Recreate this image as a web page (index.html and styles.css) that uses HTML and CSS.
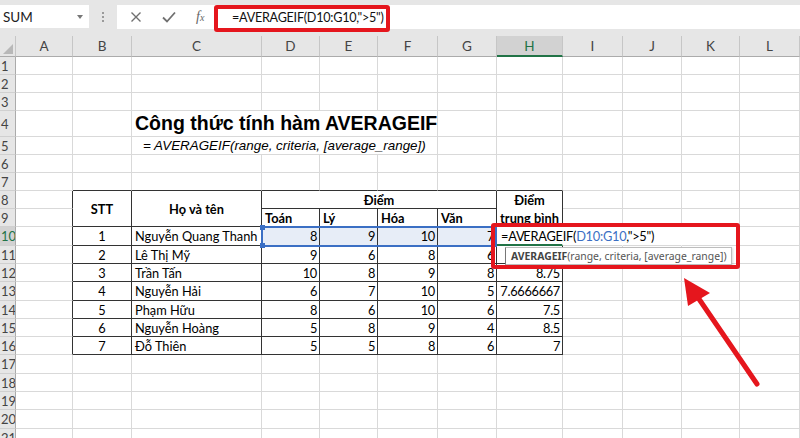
FILE: index.html
```html
<!DOCTYPE html>
<html lang="vi">
<head>
<meta charset="utf-8">
<title>AVERAGEIF</title>
<link rel="stylesheet" href="styles.css">
</head>
<body>
<div class="app">
  <div class="topbar">
    <div class="namebox"><span>SUM</span><span class="drop"></span></div>
    <div class="dots"><span></span><span></span><span></span></div>
    <div class="fbar">
      <div class="fbtns">
        <svg class="ico" width="12" height="12" viewBox="0 0 12 12"><path d="M1.5 1.5 L10.5 10.5 M10.5 1.5 L1.5 10.5" stroke="#707070" stroke-width="1.4" fill="none"/></svg>
        <svg class="ico" width="14" height="12" viewBox="0 0 14 12"><path d="M1 6.5 L5 10.5 L13 1.5" stroke="#707070" stroke-width="1.8" fill="none"/></svg>
        <span class="fx">f<sub>x</sub></span>
      </div>
      <div class="ftext">=AVERAGEIF(D10:G10,"&gt;5")</div>
    </div>
  </div>

  <div class="sheet">
    <div class="ch corner"><span class="tri"></span></div>
    <div class="ch">A</div><div class="ch">B</div><div class="ch">C</div><div class="ch">D</div><div class="ch">E</div><div class="ch">F</div><div class="ch">G</div><div class="ch on">H</div><div class="ch">I</div><div class="ch">J</div><div class="ch">K</div><div class="ch">L</div>

    <div class="rh">1</div><i></i><i></i><i></i><i></i><i></i><i></i><i></i><i></i><i></i><i></i><i></i><i></i>
    <div class="rh">2</div><i></i><i></i><i></i><i></i><i></i><i></i><i></i><i></i><i></i><i></i><i></i><i></i>
    <div class="rh">3</div><i></i><i></i><i></i><i></i><i></i><i></i><i></i><i></i><i></i><i></i><i></i><i></i>
    <div class="rh">4</div><i></i><i></i><div class="title">Công thức tính hàm AVERAGEIF</div><i></i><i></i><i></i><i></i><i></i><i></i>
    <div class="rh">5</div><i></i><i></i><div class="sub">= AVERAGEIF(range, criteria, [average_range])</div><i></i><i></i><i></i><i></i><i></i><i></i>
    <div class="rh">6</div><i></i><i></i><i></i><i></i><i></i><i></i><i></i><i></i><i></i><i></i><i></i><i></i>
    <div class="rh">7</div><i></i><i class="bt"></i><i class="bt"></i><i class="bt"></i><i class="bt"></i><i class="bt"></i><i class="bt"></i><i class="bt"></i><i></i><i></i><i></i><i></i>

    <div class="rh">8</div><i class="bl"></i><div class="t b c r2">STT</div><div class="t b c r2">Họ và tên</div><div class="t b c c4">Điểm</div><div class="t b c r2 wrap">Điểm<br>trung bình</div><i></i><i></i><i></i><i></i>
    <div class="rh">9</div><i class="bl"></i><div class="t b">Toán</div><div class="t b">Lý</div><div class="t b">Hóa</div><div class="t b">Văn</div><i></i><i></i><i></i><i></i>

    <div class="rh on">10</div><i class="bl"></i><div class="t c">1</div><div class="t">Nguyễn Quang Thanh</div><div class="t n sel">8</div><div class="t n sel">9</div><div class="t n sel">10</div><div class="t n sel">7</div><div class="t edit">=AV<span class="cur"></span>ERAGEIF(<span class="ref">D10:G10</span>,"&gt;5")</div><i class="open"></i><i class="open"></i><i></i><i></i>
    <div class="rh">11</div><i class="bl"></i><div class="t c">2</div><div class="t">Lê Thị Mỹ</div><div class="t n">9</div><div class="t n">6</div><div class="t n">8</div><div class="t n">6</div><div class="t n"></div><i></i><i></i><i></i><i></i>
    <div class="rh">12</div><i class="bl"></i><div class="t c">3</div><div class="t">Trần Tấn</div><div class="t n">10</div><div class="t n">8</div><div class="t n">9</div><div class="t n">8</div><div class="t n">8.75</div><i></i><i></i><i></i><i></i>
    <div class="rh">13</div><i class="bl"></i><div class="t c">4</div><div class="t">Nguyễn Hải</div><div class="t n">6</div><div class="t n">7</div><div class="t n">10</div><div class="t n">5</div><div class="t n">7.6666667</div><i></i><i></i><i></i><i></i>
    <div class="rh">14</div><i class="bl"></i><div class="t c">5</div><div class="t">Phạm Hữu</div><div class="t n">8</div><div class="t n">6</div><div class="t n">10</div><div class="t n">6</div><div class="t n">7.5</div><i></i><i></i><i></i><i></i>
    <div class="rh">15</div><i class="bl"></i><div class="t c">6</div><div class="t">Nguyễn Hoàng</div><div class="t n">5</div><div class="t n">8</div><div class="t n">9</div><div class="t n">4</div><div class="t n">8.5</div><i></i><i></i><i></i><i></i>
    <div class="rh">16</div><i class="bl"></i><div class="t c">7</div><div class="t">Đỗ Thiên</div><div class="t n">5</div><div class="t n">5</div><div class="t n">8</div><div class="t n">6</div><div class="t n">7</div><i></i><i></i><i></i><i></i>

    <div class="rh">17</div><i></i><i></i><i></i><i></i><i></i><i></i><i></i><i></i><i></i><i></i><i></i><i></i>
    <div class="rh">18</div><i></i><i></i><i></i><i></i><i></i><i></i><i></i><i></i><i></i><i></i><i></i><i></i>
    <div class="rh">19</div><i></i><i></i><i></i><i></i><i></i><i></i><i></i><i></i><i></i><i></i><i></i><i></i>
    <div class="rh">20</div><i></i><i></i><i></i><i></i><i></i><i></i><i></i><i></i><i></i><i></i><i></i><i></i>
    <div class="rh">21</div><i></i><i></i><i></i><i></i><i></i><i></i><i></i><i></i><i></i><i></i><i></i><i></i>

    <div class="range"><span class="hd hd1"></span><span class="hd hd2"></span></div>
  </div>

  <div class="tip"><b>AVERAGEIF</b>(range, criteria, [average_range])</div>
  <div class="mark mark-bar"></div>
  <div class="mark mark-cell"></div>
  <svg class="arrow" width="800" height="438" viewBox="0 0 800 438">
    <line x1="699" y1="299" x2="757" y2="384" stroke="#e5161d" stroke-width="5" stroke-linecap="round"/>
    <polygon points="684,278 688,306 710,293" fill="#e5161d"/>
  </svg>
</div>
</body>
</html>
```

FILE: styles.css
```css
* { box-sizing: border-box; margin: 0; padding: 0; }
html, body { margin: 0; background: #fff; }
body { width: 800px; height: 438px; overflow: hidden; font-family: Lato, "Noto Sans", sans-serif; }
.app { position: relative; width: 800px; height: 438px; overflow: hidden; }

/* top bar */
.topbar { height: 36px; background: #e6e6e6; display: flex; align-items: flex-start; padding-top: 5px; }
.namebox { width: 89px; height: 23px; background: #fff; display: flex; align-items: center; justify-content: space-between; padding: 0 6px 0 3px; font-size: 13.5px; color: #222; }
.drop { width: 0; height: 0; border-left: 3.5px solid transparent; border-right: 3.5px solid transparent; border-top: 4px solid #777; }
.dots { width: 28px; height: 23px; display: flex; flex-direction: column; align-items: center; justify-content: center; gap: 2px; }
.dots span { width: 2px; height: 2px; background: #9a9a9a; }
.fbar { flex: 1; height: 24px; background: #fff; display: flex; align-items: center; }
.fbtns { width: 97px; display: flex; align-items: center; padding-left: 13px; gap: 20px; }
.fx { font-family: "Liberation Serif", serif; font-style: italic; font-size: 14px; color: #666; }
.fx sub { font-size: 10px; vertical-align: 0; }
.ftext { padding-left: 18px; font-size: 12.6px; letter-spacing: -0.25px; color: #111; }

/* sheet */
.sheet {
  display: grid;
  position: relative;
  grid-template-columns: 16px 57px 59px 130px 58px 58px 60px 59px 66px 60px 59px 58px 60px;
  grid-template-rows: 21px 18px 18px 18px 26px 18px 18px 18px 18px 18px 19px 18px 18px 19px 18px 18px 18px 19px 18px 18px 19px 18px;
  font-size: 12.8px;
  color: #000;
}
.sheet > * {
  border-right: 1px solid #d9d9d9;
  border-bottom: 1px solid #d9d9d9;
  background: #fff;
  display: flex;
  align-items: center;
  padding: 0 3px;
  white-space: nowrap;
  overflow: hidden;
}
.sheet > .ch { background: #e6e6e6; justify-content: center; color: #444; font-size: 13.5px; border-right-color: #c6c6c6; border-bottom-color: #ababab; }
.sheet > .ch.on { background: #d2d2d2; color: #217346; border-bottom: 2px solid #217346; }
.sheet > .corner { position: relative; }
.tri { position: absolute; right: 2px; bottom: 2px; width: 0; height: 0; border-left: 10px solid transparent; border-bottom: 10px solid #b8b8b8; }
.sheet > .rh { background: #e6e6e6; color: #444; font-size: 13px; padding: 0 0 0 1px; border-right-color: #ababab; border-bottom-color: #d0d0d0; }
.sheet > .rh.on { background: #d2d2d2; color: #217346; }

.sheet > .title { grid-column: 4 / 8; font-family: "Liberation Sans", Arial, sans-serif; font-weight: bold; font-size: 19.5px; padding-left: 3px; overflow: visible; }
.sheet > .sub { grid-column: 4 / 8; font-family: "Liberation Sans", Arial, sans-serif; font-style: italic; font-size: 13.4px; padding-left: 11px; }

.sheet > .t { border-right-color: #333; border-bottom-color: #333; }
.sheet > .bt { border-bottom-color: #333; }
.sheet > .bl { border-right-color: #333; }
.sheet > .b { font-weight: bold; }
.sheet > .c { justify-content: center; }
.sheet > .n { justify-content: flex-end; letter-spacing: -0.3px; padding-right: 2px; }
.sheet > .r2 { grid-row: span 2; }
.sheet > .c4 { grid-column: span 4; }
.sheet > .wrap { text-align: center; line-height: 18px; align-items: flex-start; padding: 0; }
.sheet > .sel { background: #e7edf7; }

.sheet > .edit { overflow: visible; z-index: 2; border-right-color: transparent; border-bottom: 2px solid #217346; font-size: 12.8px; letter-spacing: -0.25px; padding-left: 4px; position: relative; }
.ref { color: #3b6fc4; }
.cur { display: inline-block; width: 1px; height: 17px; background: #000; margin-right: -1px; vertical-align: middle; }
.sheet > .open { border-right-color: transparent; }

.range { position: absolute; grid-column: 5 / 9; grid-row: 11 / 12; top: -1px; left: -1px; right: 0; bottom: -1px; border: 2px solid #3b6fc4; background: none; padding: 0; overflow: visible; }
.hd { position: absolute; width: 5px; height: 5px; background: #3b6fc4; left: -3px; }
.hd1 { top: -3px; }
.hd2 { bottom: -3px; }

/* overlays */
.tip { position: absolute; left: 505px; top: 247px; width: 227px; height: 18px; background: #fff; border: 1px solid #bdbdbd; border-left-color: #777; box-shadow: 1px 1px 2px rgba(0,0,0,0.15); font-family: "Noto Sans", sans-serif; font-size: 10.4px; color: #555; line-height: 16px; padding-left: 5px; white-space: nowrap; }
.tip b { color: #444; }
.mark { position: absolute; border: 4px solid #e5161d; border-radius: 3px; }
.mark-bar { left: 214px; top: 5px; width: 176px; height: 27px; }
.mark-cell { left: 491px; top: 223px; width: 249px; height: 46px; }
.arrow { position: absolute; left: 0; top: 0; pointer-events: none; }
```
